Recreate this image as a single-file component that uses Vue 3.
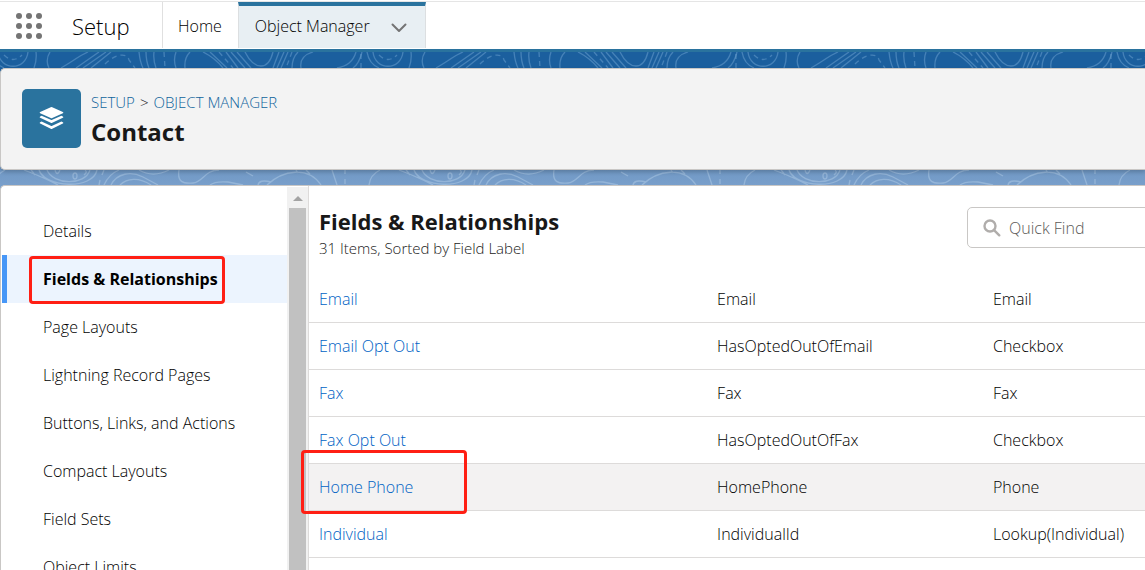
<script setup>
const navItems = [
  'Details',
  'Fields & Relationships',
  'Page Layouts',
  'Lightning Record Pages',
  'Buttons, Links, and Actions',
  'Compact Layouts',
  'Field Sets',
  'Object Limits',
]
const activeItem = 'Fields & Relationships'

const fields = [
  { label: 'Email', name: 'Email', type: 'Email' },
  { label: 'Email Opt Out', name: 'HasOptedOutOfEmail', type: 'Checkbox' },
  { label: 'Fax', name: 'Fax', type: 'Fax' },
  { label: 'Fax Opt Out', name: 'HasOptedOutOfFax', type: 'Checkbox' },
  { label: 'Home Phone', name: 'HomePhone', type: 'Phone', marked: true },
  { label: 'Individual', name: 'IndividualId', type: 'Lookup(Individual)' },
]
const launcherDots = [3, 13, 23]
</script>

<template>
  <div class="page">
    <header class="topbar">
      <button class="launcher" type="button" aria-label="App Launcher">
        <svg width="26" height="26" viewBox="0 0 26 26" fill="#747474">
          <template v-for="cy in launcherDots" :key="cy">
            <circle v-for="cx in launcherDots" :key="cx" :cx="cx" :cy="cy" r="3" />
          </template>
        </svg>
      </button>
      <span class="app-name">Setup</span>
      <nav class="tabs">
        <a class="tab" href="#home">Home</a>
        <div class="tab current">
          <a href="#object-manager">Object Manager</a>
          <button type="button" aria-label="Object Manager menu">
            <svg width="16" height="10" viewBox="0 0 16 10" fill="none" stroke="#747474" stroke-width="2" stroke-linecap="round" stroke-linejoin="round">
              <path d="M1.500 1.500 8 8l6.500-6.500" />
            </svg>
          </button>
        </div>
      </nav>
    </header>

    <div class="workspace">
      <svg class="topo" aria-hidden="true">
        <defs>
          <pattern id="topo-lines" x="45" y="0" width="375" height="140" patternUnits="userSpaceOnUse">
            <g fill="none" stroke="#7fb0dc" stroke-opacity=".42" stroke-width="1.300">
              <path d="M5 0Q0 8 4 16M43 0C34 4 28 9 16 16M54 0 31 16M61 0 38 16M66 0 46 16M94 0Q95 10 98 16M101 0Q101 9 104 16M109 0Q108 8 111 16M131 0Q128 8 131 16M145 0Q139 6 140 16" />
              <path d="M158 0Q170 6 178 16M165 0 182 16M181 0 193 16M186 0 200 16M192 0 206 16M200 0C206 12 212 14 216 14 222 14 226 8 228 0M234 0 228 16M239 0 232 16M243 0 236 16M253 0Q247 6 247 16M268 0Q254 4 256 16" />
              <path d="M311 0C308 10 302 14 292 16M317 0Q314 12 308 16M322 0Q324 12 334 16M328 0C330 19 356 19 358 0M366 0Q367 8 364 16" />
              <path stroke-dasharray="5 4" d="M60 12C70 2 82 0 84 8L90 16M119 0 120 16M174 0 188 16M247 0 241 16M316 2V16M334 3Q343 12 352 3" />
            </g>
            <g fill="none" stroke="#c3daf0" stroke-opacity=".38" stroke-width="1.300" transform="translate(-52 118)">
              <path id="topo-low" d="M12 0Q2 5 1 15M31 0Q50 7 65 15M38 0Q42 4 41 5M46 0C52 18 100 20 104 0M54 0C60 15 92 16 97 0M62 0Q64 7 67 0M92 0Q95 2 91 5M84 6a2 3 0 1 1-4 0 2 3 0 1 1 4 0M126 0Q116 4 111 15M118 15C124 3 138 1 150 7L165 15M127 15C134 8 146 7 158 15M146 0C158 7 168 4 176 0M186 0C184 12 190 14 200 13 210 12 212 0 226 0M217 15Q222 11 235 12L250 15M253 2 260 6M265 15Q266 9 278 12M274 15C290 0 315-4 328 15M303 0 305 3M313 0 317 4M339 0 344 15M111 0 109 5M107 10 106 15M352 0V4M352 9V14" />
              <use href="#topo-low" x="375" />
            </g>
          </pattern>
        </defs>
        <rect width="100%" height="100%" fill="url(#topo-lines)" />
      </svg>

      <section class="card object-header">
        <div class="object-icon">
          <svg width="25" height="25" viewBox="0 0 26 26" fill="#fff">
            <path d="M12.200 1.200q.8-.4 1.600 0l11 5q1.200.7 0 1.400l-11 5q-.8.4-1.600 0l-11-5q-1.200-.7 0-1.400z" />
            <path d="M1.200 12.200q-1.200-.7 0-1.400l1.500-.7 9.500 4.300q.8.4 1.600 0l9.500-4.300 1.500.7q1.200.7 0 1.400l-11 5.300q-.8.4-1.600 0z" />
            <path d="M1.200 18.300q-1.200-.7 0-1.400l1.500-.7 9.500 4.300q.8.4 1.600 0l9.500-4.300 1.500.7q1.200.7 0 1.400l-11 5.300q-.8.4-1.600 0z" />
          </svg>
        </div>
        <div class="object-title">
          <nav class="crumbs" aria-label="Breadcrumb">
            <a href="#setup">SETUP</a><span>&gt;</span><a href="#object-manager">OBJECT MANAGER</a>
          </nav>
          <h1>Contact</h1>
        </div>
      </section>

      <section class="card content">
        <div class="sidebar">
          <nav class="side-nav" aria-label="Object settings">
            <a
              v-for="item in navItems"
              :key="item"
              href="#section"
              :class="{ active: item === activeItem }"
            >{{ item }}<i v-if="item === activeItem" class="mark"></i></a>
          </nav>
          <div class="scroll" aria-hidden="true">
            <svg width="10" height="5" viewBox="0 0 10 5" fill="#a3a3a3"><path d="M5 0 10 5H0z" /></svg>
            <div class="thumb"></div>
          </div>
        </div>

        <main>
          <div class="list-head">
            <div>
              <h2>Fields &amp; Relationships</h2>
              <p>31 Items, Sorted by Field Label</p>
            </div>
            <label class="search">
              <svg width="18" height="18" viewBox="0 0 18 18" fill="none" stroke="#b0adab" stroke-width="2.400" stroke-linecap="round">
                <circle cx="7" cy="7" r="5.500" />
                <path d="m11.300 11.300 5 5" />
              </svg>
              <input type="search" placeholder="Quick Find" aria-label="Quick Find" />
            </label>
          </div>
          <table>
            <colgroup><col class="c-label" /><col class="c-name" /><col /></colgroup>
            <tbody>
              <tr v-for="f in fields" :key="f.name" :class="{ hovered: f.marked }">
                <td><a href="#field">{{ f.label }}</a><i v-if="f.marked" class="mark"></i></td>
                <td>{{ f.name }}</td>
                <td>{{ f.type }}</td>
              </tr>
            </tbody>
          </table>
        </main>
      </section>
    </div>
  </div>
</template>

<style>
body {
  margin: 0;
}
</style>

<style scoped>
.page {
  height: 100vh;
  overflow: hidden;
  display: flex;
  flex-direction: column;
  font: 300 16px/24px "Open Sans", "Noto Sans", sans-serif;
  color: #000;
  background: #fff;
}
.page * {
  box-sizing: border-box;
}
a {
  color: inherit;
  text-decoration: none;
}
button {
  padding: 0;
  border: 0;
  background: none;
  display: flex;
}
h1,
h2,
p {
  margin: 0;
}
h1,
h2 {
  color: #181818;
}

.topbar {
  flex: none;
  display: flex;
  align-items: center;
  height: 51px;
  margin-top: 1px;
  border-top: 1px solid #e5e5e5;
  border-bottom: 3px solid #2a739e;
}
.launcher {
  margin-left: 16px;
}
.app-name {
  width: 120px;
  padding-left: 30px;
  font-size: 22px;
  line-height: 32px;
}
.tabs {
  display: flex;
  align-self: stretch;
  margin-bottom: 1px;
  border-left: 1px solid #e0e0e0;
}
.tab {
  display: flex;
  align-items: center;
  padding: 2px 16px 0 15px;
}
.tab.current {
  gap: 21px;
  padding: 0 18px 2px 16px;
  border: solid #dcdfe1;
  border-width: 0 1px;
  border-top: 4px solid #2a739e;
  background: #e8eff3;
}
.tab.current button {
  margin-top: 3px;
}

.workspace {
  position: relative;
  flex: 1;
  min-height: 0;
  display: flex;
  flex-direction: column;
  gap: 15px;
  padding-top: 16px;
  background: linear-gradient(#1b5f9e 20px, #6f97c4 115px, #7ca2cd 140px);
}
.topo {
  position: absolute;
  top: 0;
  left: 0;
  width: 100%;
  height: 136px;
}
.card {
  position: relative;
  border: 1px solid #c9c7c5;
  border-right: 0;
  border-radius: 5px 0 0 5px;
  background: #fff;
}
.object-header {
  flex: none;
  display: flex;
  align-items: flex-start;
  gap: 10px;
  height: 102px;
  padding: 20px 0 0 21px;
  background: #f3f3f3;
  box-shadow: 0 2px 4px rgba(0, 0, 0, 0.2);
}
.object-icon {
  display: grid;
  place-items: center;
  width: 59px;
  height: 59px;
  border-radius: 5px;
  background: #2a739e;
}
.object-title {
  padding-top: 1px;
}
.crumbs {
  display: flex;
  gap: 5px;
  font-size: 15px;
  line-height: 24px;
  color: #222;
}
.crumbs a {
  color: #0f649c;
}
h1 {
  font-size: 24px;
  line-height: 36px;
  font-weight: 700;
}

.content {
  flex: 1;
  min-height: 0;
  display: flex;
  border-bottom: 0;
  border-radius: 5px 0 0;
}
.sidebar {
  flex: none;
  display: flex;
  width: 308px;
  padding: 1px 0 0 1px;
  border-right: 1px solid #dddbda;
}
.side-nav {
  flex: 1;
  padding-top: 20px;
}
.side-nav a {
  position: relative;
  display: block;
  padding: 12px 0 12px 41px;
}
.side-nav a.active {
  background: #ecf4fe;
  box-shadow: inset 5px 0 #4797f7;
  font-weight: 700;
}
.mark {
  position: absolute;
  border: 3px solid #ff1f14;
  border-radius: 4px;
}
.side-nav .mark {
  inset: 1px 62px -1px 27px;
}
.scroll {
  display: flex;
  flex-direction: column;
  align-items: center;
  gap: 7px;
  width: 21px;
  padding-top: 9px;
  background: #f1f1f1;
}
.thumb {
  flex: 1;
  width: 17px;
  background: #c1c1c1;
}

main {
  flex: 1;
  min-width: 0;
}
.list-head {
  display: flex;
  justify-content: space-between;
  padding: 20px 0 16px 10px;
}
h2 {
  font-size: 22px;
  line-height: 30px;
  font-weight: 700;
}
.list-head p {
  font-size: 15px;
  line-height: 24px;
  color: #222;
}
.search {
  display: flex;
  align-items: center;
  gap: 8px;
  width: 190px;
  height: 41px;
  margin: 1px -12px 0 0;
  padding-left: 15px;
  border: 1px solid #c9c7c5;
  border-radius: 5px;
}
.search svg {
  flex: none;
}
.search input {
  flex: 1;
  min-width: 0;
  padding: 0;
  border: 0;
  outline: 0;
  background: none;
  font: inherit;
}
.search input::placeholder {
  color: #5c5a58;
  opacity: 1;
}
table {
  width: 100%;
  table-layout: fixed;
  border-collapse: separate;
  border-spacing: 0;
}
.c-label {
  width: 47.5%;
}
.c-name {
  width: 33%;
}
td {
  position: relative;
  height: 47px;
  padding: 0 0 0 11px;
  border-bottom: 1px solid #dddbda;
  white-space: nowrap;
}
td:first-child {
  padding-left: 10px;
}
td a {
  color: #0062c4;
}
.hovered td {
  background: #f3f2f2;
}
td .mark {
  top: -14px;
  left: -8px;
  width: 166px;
  height: 64px;
}
</style>
